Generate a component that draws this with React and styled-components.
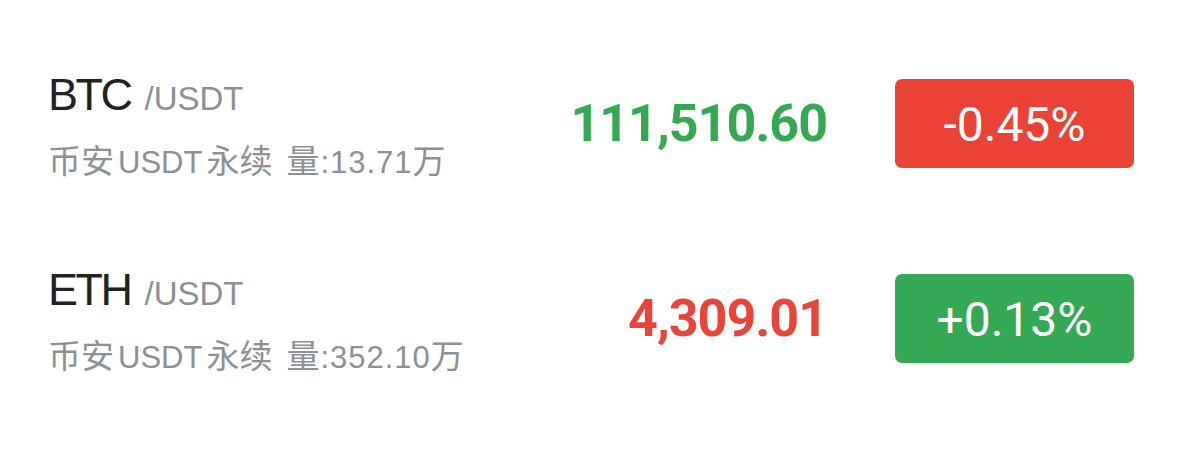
import React from 'react';
import styled, { createGlobalStyle } from 'styled-components';

const GlobalStyle = createGlobalStyle`
    body {
        margin: 0;
        background: #fff;
        font-family: "Liberation Sans", "Noto Sans CJK SC", sans-serif;
    }
`;

const List = styled.div`
    width: 1179px;
    height: 460px;
    padding-top: 26px;
    box-sizing: border-box;
    background: #fff;
`;

const Row = styled.div`
    height: 195px;
    display: flex;
    align-items: center;
    padding: 0 45px 0 48px;
`;

const Info = styled.div`
    flex: 1;
    display: flex;
    flex-direction: column;
    gap: 19px;
    padding-top: 2px;
`;

const TitleLine = styled.div`
    display: flex;
    align-items: baseline;
    height: 50px;
    line-height: 50px;
`;

const Symbol = styled.span`
    font-size: 45px;
    color: #222;
    letter-spacing: -2.5px;
`;

const Quote = styled.span`
    font-size: 33px;
    color: #8b9095;
    margin-left: 14px;
`;

const SubLine = styled.div`
    font-size: 31px;
    line-height: 40px;
    height: 40px;
    color: #8b9095;
    white-space: nowrap;
`;

const Cjk = styled.span`
    font-family: "Noto Sans CJK SC", sans-serif;
    font-size: 33px;
`;

const Latin = styled.span`
    margin: 0 4px;
`;

const Volume = styled.span`
    margin-left: 14px;
    letter-spacing: 1px;
`;

const Price = styled.div`
    font-family: Roboto, "Liberation Sans", sans-serif;
    font-weight: 700;
    font-size: 52px;
    line-height: 52px;
    letter-spacing: -1px;
    color: ${p => (p.$up ? '#34a853' : '#e8453a')};
    text-align: right;
`;

const Badge = styled.div`
    width: 239px;
    height: 89px;
    margin-left: 68px;
    border-radius: 7px;
    background: ${p => (p.$up ? '#34a853' : '#ea4335')};
    color: #fff;
    font-family: Roboto, "Liberation Sans", sans-serif;
    font-size: 48px;
    line-height: 48px;
    display: flex;
    align-items: center;
    justify-content: center;
    padding-top: 3px;
    box-sizing: border-box;
`;

const markets = [
    { symbol: 'BTC', volume: '13.71', price: '111,510.60', change: '-0.45%', up: false },
    { symbol: 'ETH', volume: '352.10', price: '4,309.01', change: '+0.13%', up: true },
];

const MarketRow = ({ m }) => (
    <Row>
        <Info>
            <TitleLine>
                <Symbol>{m.symbol}</Symbol>
                <Quote>/USDT</Quote>
            </TitleLine>
            <SubLine>
                <Cjk>币安</Cjk>
                <Latin>USDT</Latin>
                <Cjk>永续</Cjk>
                <Volume>
                    <Cjk>量</Cjk>:{m.volume}<Cjk>万</Cjk>
                </Volume>
            </SubLine>
        </Info>
        {/* price colour is opposite of the change badge in the screenshot */}
        <Price $up={!m.up}>{m.price}</Price>
        <Badge $up={m.up}>{m.change}</Badge>
    </Row>
);

export default function App() {
    return (
        <>
            <GlobalStyle />
            <List>
                {markets.map(m => (
                    <MarketRow key={m.symbol} m={m} />
                ))}
            </List>
        </>
    );
}
